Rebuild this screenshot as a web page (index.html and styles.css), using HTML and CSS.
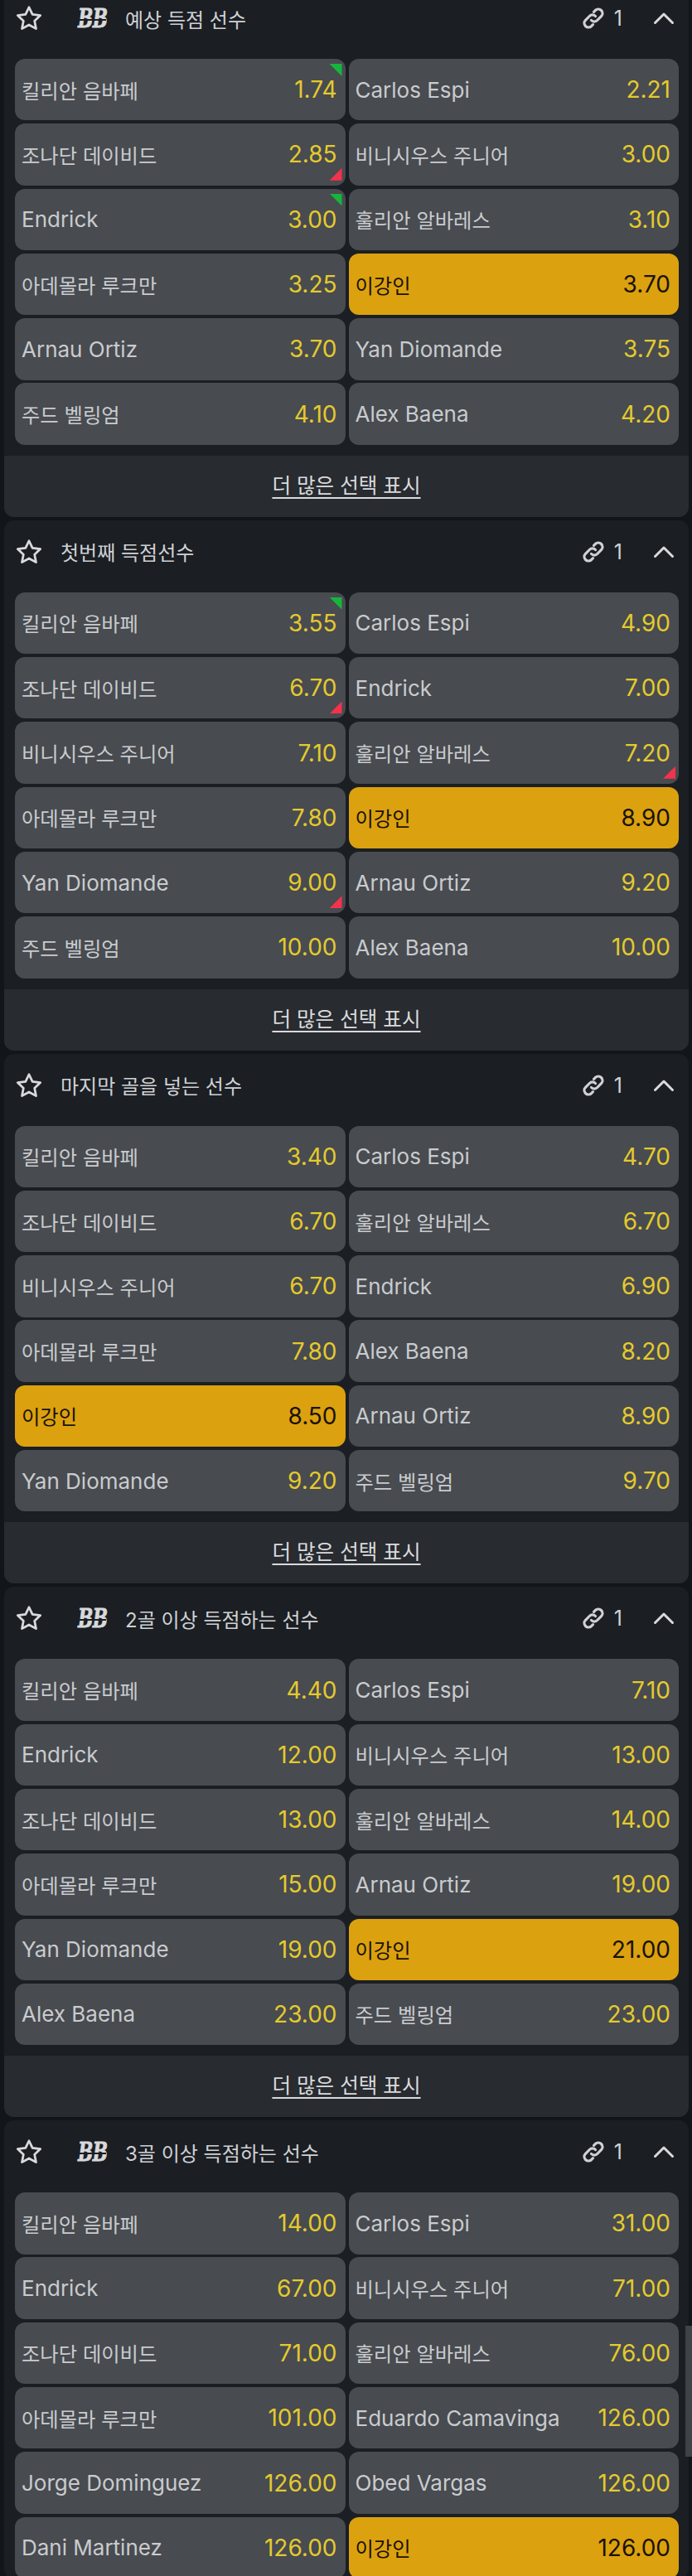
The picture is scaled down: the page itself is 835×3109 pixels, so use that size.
FILE: index.html
```html
<!DOCTYPE html>
<html lang="ko">
<head>
<meta charset="utf-8">
<title>Markets</title>
<link rel="stylesheet" href="styles.css">
</head>
<body>
<svg class="defs" width="0" height="0" aria-hidden="true">
  <symbol id="star" viewBox="0 0 32 32"><path d="M16 3.500l3.900 8.200 9 1.100-6.600 6.200 1.700 8.900-8-4.400-8 4.400 1.700-8.900-6.600-6.200 9-1.100z" fill="none" stroke="currentColor" stroke-width="2.600" stroke-linejoin="round"/></symbol>
  <symbol id="link" viewBox="0 0 28 28"><g fill="none" stroke="currentColor" stroke-width="3.200" stroke-linecap="round"><path d="M11.500 16.500a5 5 0 0 0 7.200 0l5-5a5.100 5.100 0 0 0-7.200-7.200l-2 2"/><path d="M16.500 11.500a5 5 0 0 0-7.200 0l-5 5a5.100 5.100 0 0 0 7.200 7.200l2-2"/></g></symbol>
  <symbol id="chev" viewBox="0 0 26 16"><path d="M2.500 13.500L13 3l10.500 10.500" fill="none" stroke="currentColor" stroke-width="3" stroke-linecap="round" stroke-linejoin="round"/></symbol>
</svg>
<main class="page">

<section class="card">
  <header class="head">
    <svg class="star"><use href="#star"/></svg>
    <span class="bb">BB</span><h2 class="title">예상 득점 선수</h2>
    <span class="links"><svg class="link"><use href="#link"/></svg>1</span><svg class="chev"><use href="#chev"/></svg>
  </header>
  <div class="grid">
    <button class="odd"><span class="name ko">킬리안 음바페</span><span class="price">1.74</span><i class="up"></i></button>
    <button class="odd"><span class="name">Carlos Espi</span><span class="price">2.21</span></button>
    <button class="odd"><span class="name ko">조나단 데이비드</span><span class="price">2.85</span><i class="down"></i></button>
    <button class="odd"><span class="name ko">비니시우스 주니어</span><span class="price">3.00</span></button>
    <button class="odd"><span class="name">Endrick</span><span class="price">3.00</span><i class="up"></i></button>
    <button class="odd"><span class="name ko">훌리안 알바레스</span><span class="price">3.10</span></button>
    <button class="odd"><span class="name ko">아데몰라 루크만</span><span class="price">3.25</span></button>
    <button class="odd sel"><span class="name ko">이강인</span><span class="price">3.70</span></button>
    <button class="odd"><span class="name">Arnau Ortiz</span><span class="price">3.70</span></button>
    <button class="odd"><span class="name">Yan Diomande</span><span class="price">3.75</span></button>
    <button class="odd"><span class="name ko">주드 벨링엄</span><span class="price">4.10</span></button>
    <button class="odd"><span class="name">Alex Baena</span><span class="price">4.20</span></button>
  </div>
  <a class="more">더 많은 선택 표시</a>
</section>

<section class="card">
  <header class="head">
    <svg class="star"><use href="#star"/></svg>
    <h2 class="title plain">첫번째 득점선수</h2>
    <span class="links"><svg class="link"><use href="#link"/></svg>1</span><svg class="chev"><use href="#chev"/></svg>
  </header>
  <div class="grid">
    <button class="odd"><span class="name ko">킬리안 음바페</span><span class="price">3.55</span><i class="up"></i></button>
    <button class="odd"><span class="name">Carlos Espi</span><span class="price">4.90</span></button>
    <button class="odd"><span class="name ko">조나단 데이비드</span><span class="price">6.70</span><i class="down"></i></button>
    <button class="odd"><span class="name">Endrick</span><span class="price">7.00</span></button>
    <button class="odd"><span class="name ko">비니시우스 주니어</span><span class="price">7.10</span></button>
    <button class="odd"><span class="name ko">훌리안 알바레스</span><span class="price">7.20</span><i class="down"></i></button>
    <button class="odd"><span class="name ko">아데몰라 루크만</span><span class="price">7.80</span></button>
    <button class="odd sel"><span class="name ko">이강인</span><span class="price">8.90</span></button>
    <button class="odd"><span class="name">Yan Diomande</span><span class="price">9.00</span><i class="down"></i></button>
    <button class="odd"><span class="name">Arnau Ortiz</span><span class="price">9.20</span></button>
    <button class="odd"><span class="name ko">주드 벨링엄</span><span class="price">10.00</span></button>
    <button class="odd"><span class="name">Alex Baena</span><span class="price">10.00</span></button>
  </div>
  <a class="more">더 많은 선택 표시</a>
</section>

<section class="card">
  <header class="head">
    <svg class="star"><use href="#star"/></svg>
    <h2 class="title plain">마지막 골을 넣는 선수</h2>
    <span class="links"><svg class="link"><use href="#link"/></svg>1</span><svg class="chev"><use href="#chev"/></svg>
  </header>
  <div class="grid">
    <button class="odd"><span class="name ko">킬리안 음바페</span><span class="price">3.40</span></button>
    <button class="odd"><span class="name">Carlos Espi</span><span class="price">4.70</span></button>
    <button class="odd"><span class="name ko">조나단 데이비드</span><span class="price">6.70</span></button>
    <button class="odd"><span class="name ko">훌리안 알바레스</span><span class="price">6.70</span></button>
    <button class="odd"><span class="name ko">비니시우스 주니어</span><span class="price">6.70</span></button>
    <button class="odd"><span class="name">Endrick</span><span class="price">6.90</span></button>
    <button class="odd"><span class="name ko">아데몰라 루크만</span><span class="price">7.80</span></button>
    <button class="odd"><span class="name">Alex Baena</span><span class="price">8.20</span></button>
    <button class="odd sel"><span class="name ko">이강인</span><span class="price">8.50</span></button>
    <button class="odd"><span class="name">Arnau Ortiz</span><span class="price">8.90</span></button>
    <button class="odd"><span class="name">Yan Diomande</span><span class="price">9.20</span></button>
    <button class="odd"><span class="name ko">주드 벨링엄</span><span class="price">9.70</span></button>
  </div>
  <a class="more">더 많은 선택 표시</a>
</section>

<section class="card">
  <header class="head">
    <svg class="star"><use href="#star"/></svg>
    <span class="bb">BB</span><h2 class="title">2골 이상 득점하는 선수</h2>
    <span class="links"><svg class="link"><use href="#link"/></svg>1</span><svg class="chev"><use href="#chev"/></svg>
  </header>
  <div class="grid">
    <button class="odd"><span class="name ko">킬리안 음바페</span><span class="price">4.40</span></button>
    <button class="odd"><span class="name">Carlos Espi</span><span class="price">7.10</span></button>
    <button class="odd"><span class="name">Endrick</span><span class="price">12.00</span></button>
    <button class="odd"><span class="name ko">비니시우스 주니어</span><span class="price">13.00</span></button>
    <button class="odd"><span class="name ko">조나단 데이비드</span><span class="price">13.00</span></button>
    <button class="odd"><span class="name ko">훌리안 알바레스</span><span class="price">14.00</span></button>
    <button class="odd"><span class="name ko">아데몰라 루크만</span><span class="price">15.00</span></button>
    <button class="odd"><span class="name">Arnau Ortiz</span><span class="price">19.00</span></button>
    <button class="odd"><span class="name">Yan Diomande</span><span class="price">19.00</span></button>
    <button class="odd sel"><span class="name ko">이강인</span><span class="price">21.00</span></button>
    <button class="odd"><span class="name">Alex Baena</span><span class="price">23.00</span></button>
    <button class="odd"><span class="name ko">주드 벨링엄</span><span class="price">23.00</span></button>
  </div>
  <a class="more">더 많은 선택 표시</a>
</section>

<section class="card">
  <header class="head">
    <svg class="star"><use href="#star"/></svg>
    <span class="bb">BB</span><h2 class="title">3골 이상 득점하는 선수</h2>
    <span class="links"><svg class="link"><use href="#link"/></svg>1</span><svg class="chev"><use href="#chev"/></svg>
  </header>
  <div class="grid">
    <button class="odd"><span class="name ko">킬리안 음바페</span><span class="price">14.00</span></button>
    <button class="odd"><span class="name">Carlos Espi</span><span class="price">31.00</span></button>
    <button class="odd"><span class="name">Endrick</span><span class="price">67.00</span></button>
    <button class="odd"><span class="name ko">비니시우스 주니어</span><span class="price">71.00</span></button>
    <button class="odd"><span class="name ko">조나단 데이비드</span><span class="price">71.00</span></button>
    <button class="odd"><span class="name ko">훌리안 알바레스</span><span class="price">76.00</span></button>
    <button class="odd"><span class="name ko">아데몰라 루크만</span><span class="price">101.00</span></button>
    <button class="odd"><span class="name">Eduardo Camavinga</span><span class="price">126.00</span></button>
    <button class="odd"><span class="name">Jorge Dominguez</span><span class="price">126.00</span></button>
    <button class="odd"><span class="name">Obed Vargas</span><span class="price">126.00</span></button>
    <button class="odd"><span class="name">Dani Martinez</span><span class="price">126.00</span></button>
    <button class="odd sel"><span class="name ko">이강인</span><span class="price">126.00</span></button>
  </div>
</section>

</main>
<div class="scrollthumb"></div>
</body>
</html>
```

FILE: styles.css
```css
* { box-sizing: border-box; }
html, body { margin: 0; padding: 0; }
body {
  width: 835px;
  height: 3109px;
  overflow: hidden;
  background: #12151a;
  font-family: Inter, "Noto Sans CJK KR", sans-serif;
  position: relative;
}
.defs { position: absolute; }
.page {
  display: flex;
  flex-direction: column;
  gap: 4px;
  margin-top: -16px;
  padding: 0 4px 0 5px;
}
.card {
  background: #1b1e23;
  border-radius: 12px;
  overflow: hidden;
  flex: none;
}
.head {
  display: flex;
  align-items: center;
  height: 87px;
  color: #cfd1d4;
  padding: 0 17px 11px 13px;
}
.star { width: 34px; height: 34px; flex: none; color: #d9dadc; }
.bb {
  position: relative;
  margin-left: 42px;
  width: 57px;
  height: 36px;
  flex: none;
  font-family: "DejaVu Serif", serif;
  font-style: italic;
  font-weight: 700;
  font-size: 32px;
  line-height: 36px;
  letter-spacing: -1px;
  white-space: nowrap;
  transform: scaleX(0.68);
  transform-origin: left center;
  color: #d8d9db;
  -webkit-text-stroke: 0.8px #d8d9db;
}
.bb::after {
  content: "";
  position: absolute;
  left: -2px;
  width: 52px;
  top: 19px;
  height: 2px;
  background: #1b1e23;
}
.title {
  margin: 0;
  flex: 1;
  font-size: 24px;
  font-weight: 400;
  color: #cfd1d4;
}
.title.plain { margin-left: 21px; }
.links { display: flex; align-items: center; gap: 11px; font-size: 25px; color: #cfd1d4; }
.link { width: 28px; height: 28px; }
.chev { width: 26px; height: 16px; margin-left: 37px; color: #d9dadc; }
.grid {
  display: grid;
  grid-template-columns: 1fr 1fr;
  column-gap: 4px;
  row-gap: 3.900px;
  padding: 0 12px 0 13px;
}
.odd {
  position: relative;
  display: flex;
  align-items: center;
  justify-content: space-between;
  height: 74.400px;
  padding: 0 10px 0 8px;
  border: 0;
  border-radius: 12px;
  background: #484b50;
  font-family: inherit;
  text-align: left;
}
.name { font-size: 26px; color: #c9cbce; white-space: nowrap; }
.name.ko { font-size: 24.300px; }
.price { font-size: 28px; color: #e4ca2d; }
.sel { background: #dba10f; }
.sel .name, .sel .price { color: #1a1208; }
.up, .down { position: absolute; right: 4px; width: 15px; height: 15px; }
.up { top: 6px; background: #17b53c; clip-path: polygon(0 0, 100% 0, 100% 100%); }
.down { bottom: 6px; background: #f4324c; clip-path: polygon(100% 0, 100% 100%, 0 100%); }
.more {
  display: block;
  margin-top: 13px;
  height: 74px;
  line-height: 73px;
  background: #282b30;
  color: #d9dadc;
  font-size: 24.600px;
  text-align: center;
  text-decoration: underline;
  text-decoration-thickness: 2px;
  text-underline-offset: 5px;
}
.scrollthumb {
  position: absolute;
  right: 0;
  top: 2807px;
  width: 8px;
  height: 158px;
  background: #3f4247;
}
```
